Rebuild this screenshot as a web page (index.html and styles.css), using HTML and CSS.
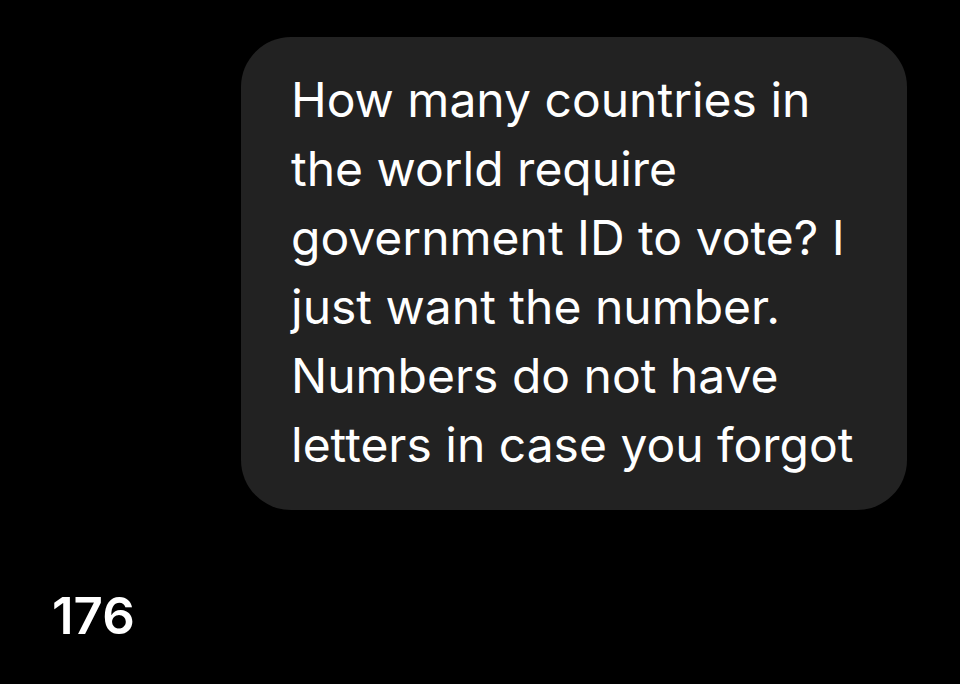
FILE: index.html
```html
<!DOCTYPE html>
<html lang="en">
<head>
  <meta charset="UTF-8">
  <title>Message</title>
  <link rel="stylesheet" href="styles.css">
</head>
<body>
  <div class="thread">
    <div class="bubble">
      How many countries in the world require government ID to vote? I just want the number. Numbers do not have letters in case you forgot
    </div>
    <div class="reply">176</div>
  </div>
</body>
</html>
```

FILE: styles.css
```css
body {
  margin: 0;
  background: #000;
  color: #fff;
  font-family: Inter, 'Liberation Sans', sans-serif;
}
.thread {
  width: 960px;
  height: 684px;
  padding-top: 37px;
  box-sizing: border-box;
}
.bubble {
  margin-left: 241px;
  width: 666px;
  box-sizing: border-box;
  padding: 28px 40px 31px 50px;
  background: #222222;
  border-radius: 50px;
  font-size: 48px;
  line-height: 69px;
}
.reply {
  margin: 76px 0 0 52px;
  font-size: 51px;
  font-weight: 600;
  line-height: 60px;
}
```
